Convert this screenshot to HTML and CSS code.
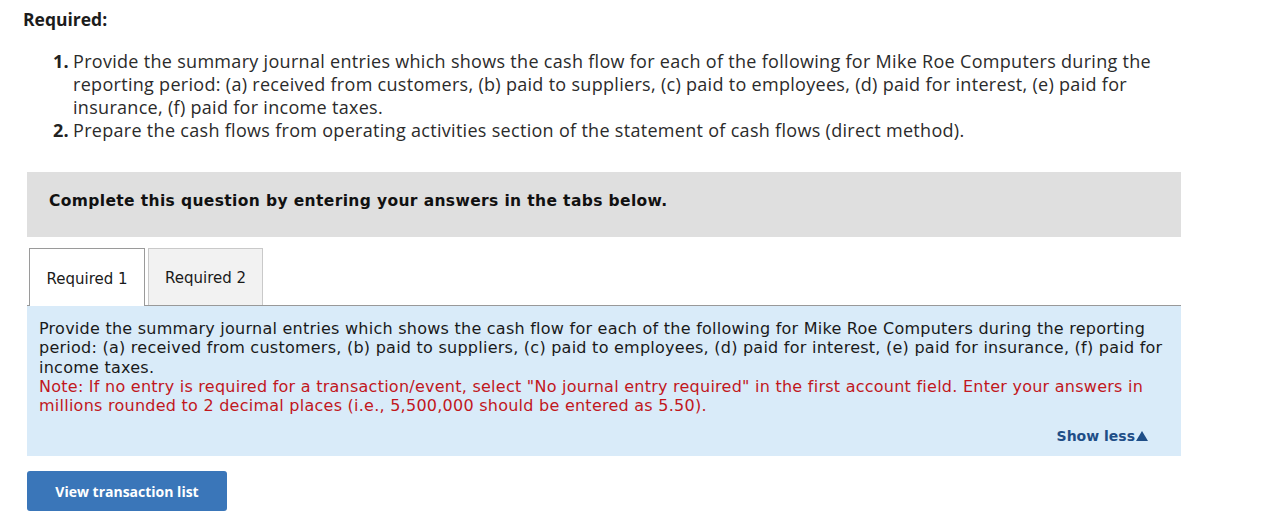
FILE: index.html
```html
<!DOCTYPE html>
<html>
<head>
<meta charset="utf-8">
<link rel="stylesheet" href="styles.css">
</head>
<body>
<div class="page">
  <div class="req-title">Required:</div>
  <ol class="req-list">
    <li><span class="num">1.</span><span class="txt">Provide the summary journal entries which shows the cash flow for each of the following for Mike Roe Computers during the reporting period: (a) received from customers, (b) paid to suppliers, (c) paid to employees, (d) paid for interest, (e) paid for insurance, (f) paid for income taxes.</span></li>
    <li><span class="num">2.</span><span class="txt">Prepare the cash flows from operating activities section of the statement of cash flows (direct method).</span></li>
  </ol>
  <div class="question">
    <div class="complete">Complete this question by entering your answers in the tabs below.</div>
    <div class="tabs">
      <div class="tab active">Required 1</div>
      <div class="tab">Required 2</div>
    </div>
    <div class="panel">
      <p class="instr">Provide the summary journal entries which shows the cash flow for each of the following for Mike Roe Computers during the reporting period: (a) received from customers, (b) paid to suppliers, (c) paid to employees, (d) paid for interest, (e) paid for insurance, (f) paid for income taxes.</p>
      <p class="note">Note: If no entry is required for a transaction/event, select "No journal entry required" in the first account field. Enter your answers in millions rounded to 2 decimal places (i.e., 5,500,000 should be entered as 5.50).</p>
      <div class="showless"><span>Show less</span><span class="tri"></span></div>
    </div>
    <button class="view-btn">View transaction list</button>
  </div>
</div>
</body>
</html>
```

FILE: styles.css
```css
html, body {
  margin: 0;
  padding: 0;
  background: #fff;
}
.page {
  padding: 8px 0 0 23px;
  font-family: "Open Sans", "Liberation Sans", sans-serif;
  color: #222;
}
.req-title {
  font-weight: 700;
  font-size: 17.5px;
  line-height: 22px;
  color: #1c1c1c;
}
.req-list {
  list-style: none;
  margin: 20px 0 0 0;
  padding: 0 0 0 30px;
  width: 1110px;
  font-size: 18px;
  letter-spacing: 0.3px;
  line-height: 23px;
  color: #2b2b2b;
}
.req-list li {
  display: flex;
}
.num {
  width: 20px;
  flex: none;
  font-weight: 700;
  color: #222;
}
.txt {
  flex: 1;
}
.question {
  margin: 30px 0 0 4px;
  width: 1154px;
  font-family: "DejaVu Sans", Verdana, sans-serif;
}
.complete {
  background: #dfdfdf;
  height: 65px;
  box-sizing: border-box;
  padding: 19px 0 0 22px;
  font-weight: 700;
  font-size: 15.5px;
  letter-spacing: 0.37px;
  line-height: 20px;
  color: #111;
}
.tabs {
  margin-top: 10px;
  display: flex;
  gap: 3px;
  padding-left: 2px;
  border-bottom: 1px solid #999;
  height: 58px;
  align-items: flex-end;
}
.tab {
  height: 57px;
  box-sizing: border-box;
  display: flex;
  align-items: center;
  justify-content: center;
  padding-top: 2px;
  font-size: 15px;
  color: #1a1a1a;
  border: 1px solid #c9c9c9;
  border-bottom: none;
  background: #f2f2f2;
  width: 115px;
}
.tab.active {
  background: #fff;
  border-color: #9a9a9a;
  width: 116px;
  height: 58px;
  margin-bottom: -1px;
}
.panel {
  background: #d9ebf9;
  padding: 13px 11px 11px 12px;
  font-size: 16px;
  letter-spacing: 0.25px;
  line-height: 19.3px;
  color: #1a1a1a;
}
.panel p {
  margin: 0;
}
.note {
  color: #c1171d;
}
.showless {
  margin-top: 13px;
  display: flex;
  justify-content: flex-end;
  align-items: center;
  padding-right: 22px;
  font-weight: 700;
  font-size: 14px;
  letter-spacing: 0;
  color: #1f4e87;
  line-height: 17px;
  height: 17px;
}
.tri {
  display: block;
  width: 0;
  height: 0;
  margin: 0 0 1px 1px;
  border-left: 6px solid transparent;
  border-right: 6px solid transparent;
  border-bottom: 10px solid #1f4e87;
}
.view-btn {
  margin-top: 15px;
  width: 200px;
  height: 40px;
  border: none;
  border-radius: 3px;
  background: #3a76b9;
  color: #fff;
  font-family: "Open Sans", "Liberation Sans", sans-serif;
  font-weight: 700;
  font-size: 14px;
  padding: 0;
}
```
